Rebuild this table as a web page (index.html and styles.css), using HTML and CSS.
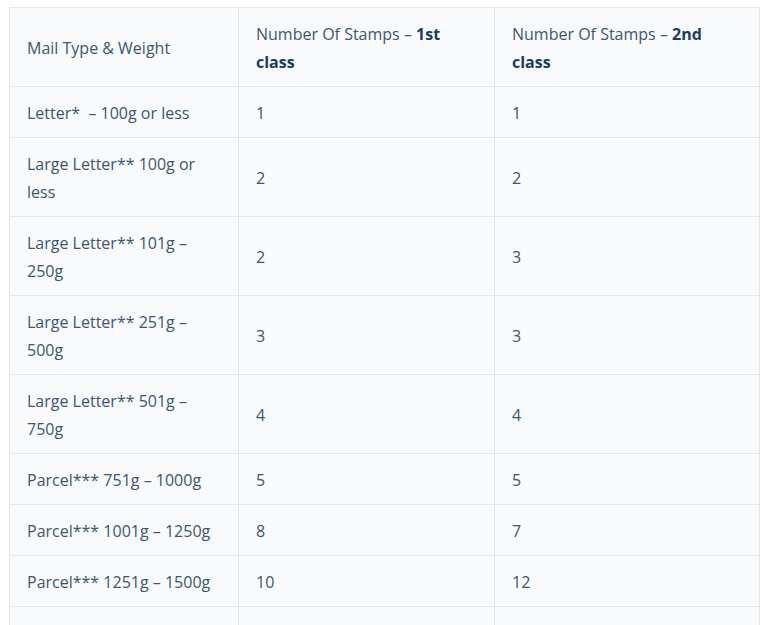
FILE: index.html
```html
<!DOCTYPE html>
<html>
<head>
<meta charset="utf-8">
<link rel="stylesheet" href="styles.css">
</head>
<body>
<div class="wrap">
<table class="stamps">
<colgroup><col class="c1"><col class="c2"><col class="c3"></colgroup>
<tbody>
<tr><td>Mail Type &amp; Weight</td><td>Number Of Stamps – <strong>1st class</strong></td><td>Number Of Stamps – <strong>2nd class</strong></td></tr>
<tr><td>Letter*&nbsp; – 100g or less</td><td>1</td><td>1</td></tr>
<tr><td>Large Letter** 100g or less</td><td>2</td><td>2</td></tr>
<tr><td>Large Letter** 101g – 250g</td><td>2</td><td>3</td></tr>
<tr><td>Large Letter** 251g – 500g</td><td>3</td><td>3</td></tr>
<tr><td>Large Letter** 501g – 750g</td><td>4</td><td>4</td></tr>
<tr><td>Parcel*** 751g – 1000g</td><td>5</td><td>5</td></tr>
<tr><td>Parcel*** 1001g – 1250g</td><td>8</td><td>7</td></tr>
<tr><td>Parcel*** 1251g – 1500g</td><td>10</td><td>12</td></tr>
<tr><td>&nbsp;</td><td>&nbsp;</td><td>&nbsp;</td></tr>
</tbody>
</table>
</div>
</body>
</html>
```
FILE: styles.css
```css
html, body {
  margin: 0;
  padding: 0;
  background: #ffffff;
}
body {
  font-family: "Open Sans", "Noto Sans", sans-serif;
  color: #425569;
  overflow: hidden;
}
.wrap {
  padding: 7px 0 0 9px;
}
.stamps {
  border-collapse: collapse;
  width: 750px;
  table-layout: fixed;
  background: #f8fafc;
}
.c1 { width: 229px; }
.c2 { width: 256px; }
.c3 { width: 265px; }
.stamps td {
  border: 1px solid #e3e7eb;
  padding: 12px 17px 10px;
  font-size: 16px;
  line-height: 28px;
  vertical-align: middle;
  text-align: left;
}
.stamps strong {
  font-weight: 700;
  color: #1c3d5e;
}
```
